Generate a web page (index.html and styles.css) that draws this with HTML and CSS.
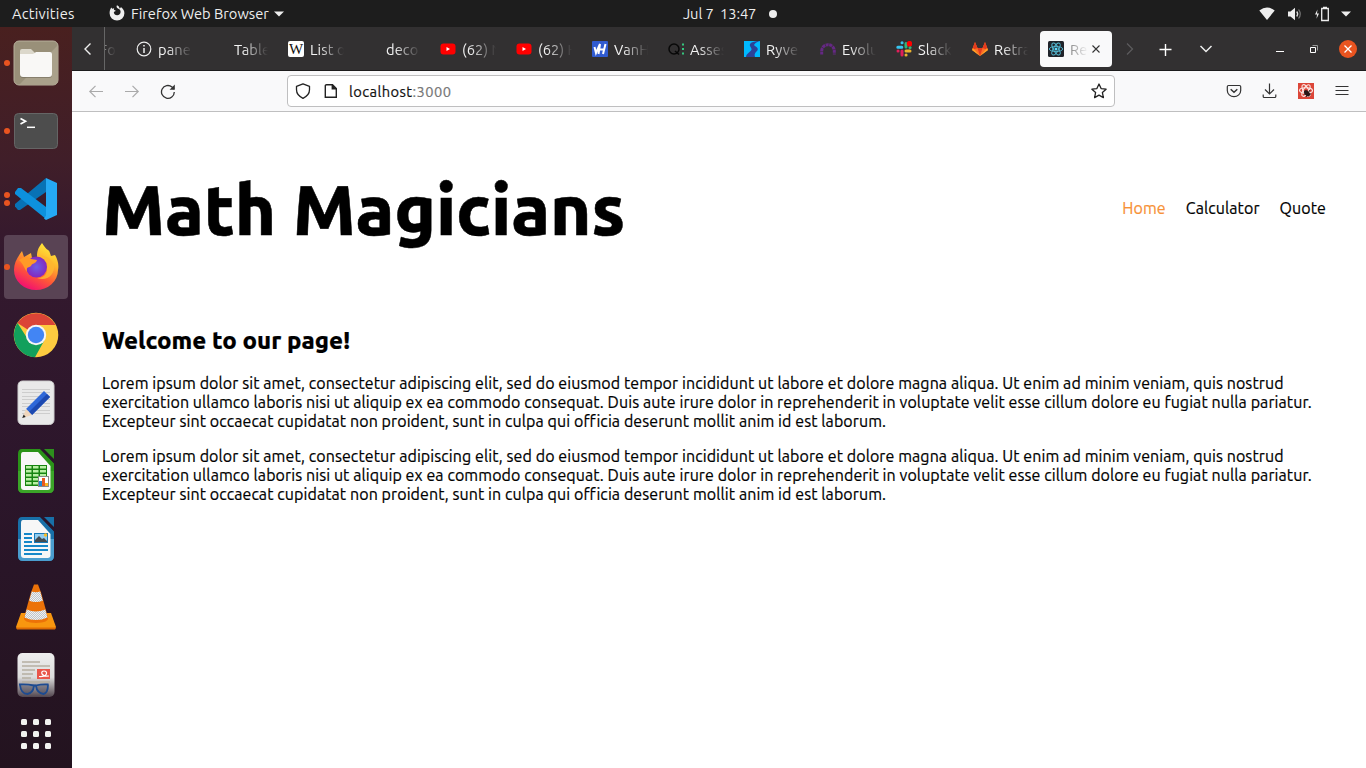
FILE: index.html
```html
<!DOCTYPE html>
<html lang="en">
<head>
<meta charset="utf-8">
<title>React App</title>
<link rel="stylesheet" href="styles.css">
</head>
<body>
<header class="panel">
  <div class="panel-left">
    <span class="activities">Activities</span>
    <svg class="ff" width="16" height="16" viewBox="0 0 16 16"><path d="M8 .2c2 1 2.500 2.200 2.500 3.200.8-.3 1.400-1 1.400-1.500 2 1.400 3.500 3.600 3.500 6.300a7.400 7.400 0 0 1-14.800 0c0-2.300.6-4.300 1.700-5.700l.9 1.300 1.900-.6-.2 1.600 1.900 1c-.6.900-1.600.8-2 1.400.2 1.700 1.500 3 3.300 3 2 0 3.500-1.500 3.500-3.500 0-2.200-1.500-2.800-2.700-3.300C7.400 2.600 7.300 1.300 8 .2z" fill="#eee"/></svg>
    <span class="appname">Firefox Web Browser</span>
    <svg width="10" height="6" viewBox="0 0 10 6"><path d="M0 .5h10L5 5.500z" fill="#eee"/></svg>
  </div>
  <div class="panel-clock"><span class="clock">Jul 7&nbsp; 13:47</span><i class="dot"></i></div>
  <div class="panel-right">
    <svg width="16" height="14" viewBox="0 0 16 14"><path d="M.3 3.600Q8-2.400 15.700 3.600L8 13z" fill="#eee"/></svg>
    <svg width="16" height="14" viewBox="0 0 16 14"><path d="M1 4.500h2.500L8 .8v12.400L3.500 9.500H1z" fill="#eee"/><path d="M9.700 4.500q2 2.500 0 5" fill="none" stroke="#ddd" stroke-width="1.300"/><path d="M11.600 2.500q3.300 4.500 0 9" fill="none" stroke="#777" stroke-width="1.200"/></svg>
    <svg width="16" height="16" viewBox="0 0 16 16"><path d="M3.500 3.500L1 8.500h2l-.5 4.300L5 7.500H3z" fill="#eee"/><path d="M7.700 2.500h6.600v12H7.700zM9 1.300h4" fill="none" stroke="#eee" stroke-width="1.300"/></svg>
    <svg width="10" height="6" viewBox="0 0 10 6"><path d="M0 .5h10L5 5.500z" fill="#eee"/></svg>
  </div>
</header>
<div class="desktop">
  <nav class="dock">
    <div class="app run1"><svg viewBox="0 0 48 48"><rect x="2" y="2" width="44" height="44" rx="5" fill="#999079" stroke="#b7af9c"/><path d="M46 6v35q0 5-5 5H7z" fill="#aaa18b"/><path d="M8 12q0-2 2-2h9l4 4h13v5H8z" fill="#dcd8cb"/><path d="M8 16h13l3-3h14q2 0 2 2v21q0 3-3 3H11q-3 0-3-3z" fill="#6f6959" opacity=".6"/><path d="M8 15h13l3-2h14q2 0 2 2v20q0 3-3 3H11q-3 0-3-3z" fill="#f9f8f6"/></svg></div>
    <div class="app run1"><svg viewBox="0 0 48 48"><rect x="2.500" y="6.500" width="43" height="35" rx="4" fill="#4d4d4d" stroke="#656565"/><path d="M8.500 11.500l5 2.700-5 2.700" fill="none" stroke="#fff" stroke-width="1.700"/><path d="M15 20.300h8" stroke="#fff" stroke-width="1.500"/></svg></div>
    <div class="app run2"><svg viewBox="0 0 48 48"><path d="M34 3V17L8 35 6 35 3 31.500V29z" fill="#0872b5"/><path d="M3 17l3-4h3l25 19v12L3 19z" fill="#0d91dd"/><path d="M34 3l11 5v32l-11 5-2-1.500 2-3z" fill="#25a9f4"/></svg></div>
    <div class="app run1 current"><svg viewBox="0 0 48 48"><defs><linearGradient id="fx" x1=".8" y1="0" x2=".3" y2="1"><stop offset="0" stop-color="#fff23c"/><stop offset=".35" stop-color="#ffb52c"/><stop offset=".65" stop-color="#ff5b35"/><stop offset="1" stop-color="#f10b74"/></linearGradient><radialGradient id="gl"><stop offset="0" stop-color="#6a5ee8"/><stop offset="1" stop-color="#8428be"/></radialGradient></defs><path d="M30 0c2 3 4 6 6 7s2 4 3 6l4-1c3 5 4 10 3 15a22 20 0 0 1-44 0c0-7 3-12 8-19l2 6 7-4 1 5 5 0c0-5 0-9 5-15z" fill="url(#fx)"/><circle cx="24.500" cy="24" r="10.500" fill="url(#gl)"/><path d="M7 17c5-3 8-3 12-1l6 1c-1 4-5 3-6 6-2 2-5 0-4 6-3-4-3-7-8-12z" fill="#ff9a26"/><path d="M28 12c6 3 8 8 7 13 1 7-5 10-10 10 10 4 18-4 17-12-1-7-8-10-14-11z" fill="#ffb72f" opacity=".85"/></svg></div>
    <div class="app"><svg viewBox="0 0 48 48"><circle cx="24" cy="24" r="22.300" fill="#fdcb40"/><path d="M24 24L5.500 12A22.300 22.300 0 0 1 43.500 14H24z" fill="#db4437"/><path d="M5.500 12A22.300 22.300 0 0 0 23 46.300L32 30H17z" fill="#12a05c"/><circle cx="24" cy="24" r="10.200" fill="#f5f5f5"/><circle cx="24" cy="24" r="8.200" fill="#4285f4"/></svg></div>
    <div class="app"><svg viewBox="0 0 48 48"><rect x="6" y="2" width="36" height="43.500" rx="4.500" fill="#e9e9e9" stroke="#cfcfcf"/><path d="M10 10.500h28M10 13.500h28M10 17.500h28M10 20.500h28M10 24.500h28M10 27.500h28M10 31.500h28M10 34.500h28" stroke="#cdcdcd"/><path d="M32 12l6 6-18 18-6-6z" fill="#2f68d8"/><path d="M35 15l3 3-18 18-3-3z" fill="#1d49b0"/><path d="M14 30l6 6-9.500 3z" fill="#f0d6bc"/><path d="M11.700 35.500l2 2.500-3.500 1z" fill="#222"/></svg></div>
    <div class="app"><svg viewBox="0 0 48 48"><path d="M10 2h18l14 14v25q0 5-5 5H11q-5 0-5-5V7q0-5 4-5z" fill="#2a9318"/><path d="M6 24h36v17q0 5-5 5H11q-5 0-5-5z" fill="#3ba528"/><path d="M11 5h15l12.500 14v21q0 3-3 3H12q-3 0-3-3V8q0-3 2-3z" fill="#f7f7f7"/><path d="M29 1l14 15" stroke="#2a152b" stroke-width="2"/><path d="M32 2h10v10z" fill="#2d8f1d"/><path d="M13 18h22v21H13z" fill="#168410"/><path d="M14 19h5.500v2.500H14zM21 19h5.500v2.500H21zM28 19h6v2.500h-6zM14 23h5.500v2.500H14zM21 23h5.500v2.500H21zM28 23h6v2.500h-6zM14 27h5.500v2.500H14zM21 27h5.500v2.500H21zM28 27h6v2.500h-6zM14 31h5.500v2.500H14zM21 31h5.500v2.500H21zM14 35h5.500v2.500H14zM21 35h5.500v2.500H21z" fill="#b9f0a4"/><rect x="26.500" y="29.500" width="10" height="10" fill="#fff" stroke="#888"/><path d="M27 34h3v5h-3z" fill="#1e88d2"/><path d="M30 31h3v8h-3z" fill="#e65b20"/><path d="M33 36h3v3h-3z" fill="#fbb51f"/></svg></div>
    <div class="app"><svg viewBox="0 0 48 48"><path d="M10 2h18l14 14v25q0 5-5 5H11q-5 0-5-5V7q0-5 4-5z" fill="#1870a8"/><path d="M6 24h36v17q0 5-5 5H11q-5 0-5-5z" fill="#4a9dce"/><path d="M11 5h15l12.500 14v21q0 3-3 3H12q-3 0-3-3V8q0-3 2-3z" fill="#f7f7f7"/><path d="M29 1l14 15" stroke="#2a152b" stroke-width="2"/><path d="M32 2h10v10z" fill="#1870a8"/><path d="M12 19h8M12 23h8M12 27h8M12 31h24M12 35h24M12 39h18" stroke="#1688c9" stroke-width="2"/><rect x="22.500" y="18.500" width="13" height="9" fill="#91cdf0" stroke="#1779b8"/><path d="M23 27v-2l4-4 3 3 2-1 3 3v1z" fill="#434b50"/><circle cx="33.500" cy="20" r="1.700" fill="#f8bc26"/></svg></div>
    <div class="app"><svg viewBox="0 0 48 48"><defs><pattern id="chk" width="2" height="2" patternUnits="userSpaceOnUse"><path d="M0 0h2v2H0z" fill="#f0f1f2"/><path d="M0 0h1v1H0zM1 1h1v1H1z" fill="#bfc5ca"/></pattern></defs><path d="M9 30h30l5 14-1 2H5l-1-2z" fill="#f8960f"/><path d="M4 44.500h40l-1 2H5z" fill="#dc6a04"/><path d="M22 1.500h4l3 8 7 25q1 5-12 5.500-13-.5-12-5.500l7-25z" fill="#ec7208"/><path d="M19.800 8.500q4 1.500 8.400 0l2.600 9.300q-7 2.500-13.600 0zM14.700 26.500q9 4 18.600 0l2.200 8q-11.500 5-23 0z" fill="url(#chk)"/></svg></div>
    <div class="app"><svg viewBox="0 0 48 48"><defs><linearGradient id="dv" x1="0" y1="0" x2="0" y2="1"><stop offset="0" stop-color="#eee"/><stop offset=".55" stop-color="#dcdcdc"/><stop offset="1" stop-color="#52464f"/></linearGradient></defs><rect x="5.500" y="2" width="37" height="44" rx="5" fill="url(#dv)"/><path d="M10 11h18M10 15h28M10 19h13M10 23h11M10 27h9M10 31h28" stroke="#b5aea1" stroke-width="1.700"/><path d="M25 18h13v10H25z" fill="#e9554a"/><path d="M27 25.500c9 .5 9-5.500 5-5.500s-3 6 5 5" stroke="#fff" stroke-width="1.200" fill="none"/><path d="M7 33.500Q15 33 22 34.500h2Q30 33 36.500 33.500M8 34q1 9 7.500 9Q21 42 22 35M24 35q1 7 7.500 8Q36 42 36 33.500" fill="#4e5163" fill-opacity=".4" stroke="#1d4b91" stroke-width="1.800"/></svg></div>
    <div class="apps"><i></i><i></i><i></i><i></i><i></i><i></i><i></i><i></i><i></i></div>
  </nav>
  <section class="browser">
    <div class="tabbar">
      <div class="scroll-left"><svg width="16" height="16" viewBox="0 0 16 16"><path d="M10.500 2.500L5 8l5.500 5.500" fill="none" stroke="#eee" stroke-width="1.400"/></svg></div>
      <div class="tabs">
        <div class="tab"><i class="fav"></i><span class="dim">Fo</span></div>
        <div class="tab"><svg class="fav" viewBox="0 0 16 16"><circle cx="8" cy="8" r="6.800" fill="none" stroke="#eee" stroke-width="1.200"/><path d="M8 7v5M8 4v1.500" stroke="#eee" stroke-width="1.500"/></svg><span>pane</span></div>
        <div class="tab"><i class="fav"></i><span>Table</span></div>
        <div class="tab"><b class="fav wiki">W</b><span>List of</span></div>
        <div class="tab"><i class="fav"></i><span>deco</span></div>
        <div class="tab"><svg class="fav" viewBox="0 0 16 16"><rect x=".5" y="2.500" width="15" height="11" rx="3" fill="#f00"/><path d="M6.500 6v4L10 8z" fill="#fff"/></svg><span>(62) N</span></div>
        <div class="tab"><svg class="fav" viewBox="0 0 16 16"><rect x=".5" y="2.500" width="15" height="11" rx="3" fill="#f00"/><path d="M6.500 6v4L10 8z" fill="#fff"/></svg><span>(62) H</span></div>
        <div class="tab"><svg class="fav" viewBox="0 0 16 16"><rect width="16" height="16" rx="1" fill="#305bd0"/><path d="M2.500 6l1.500 6 4-9-1.500 10M7.500 8.500h5M13.500 3L11 13" fill="none" stroke="#fff" stroke-width="2"/></svg><span>VanH</span></div>
        <div class="tab"><svg class="fav" viewBox="0 0 16 16"><circle cx="6" cy="8" r="5" fill="none" stroke="#080808" stroke-width="1.500"/><path d="M7 10l4 3.500" stroke="#080808" stroke-width="1.500"/><path d="M15 2.500v11" stroke="#35d888" stroke-width="1.800" stroke-dasharray="2 2.500"/></svg><span>Asses</span></div>
        <div class="tab"><svg class="fav" viewBox="0 0 16 16"><path d="M0 0h16v16H0z" fill="#00b9ff"/><path d="M16 0C8 0 5 2.500 6 5s3 3 0 5.500S2 14 2 16h9c-1-3 0-4 2-6s0-4-2-5 0-3.500 5-5z" fill="#2c4298"/></svg><span>Ryve</span></div>
        <div class="tab"><svg class="fav" viewBox="0 0 16 16"><path d="M1.700 13.500V10a6.300 6.300 0 0 1 12.600 0v3.500" fill="none" stroke="#652884" stroke-width="3" stroke-dasharray="3 .6"/></svg><span>Evolu</span></div>
        <div class="tab"><svg class="fav" viewBox="0 0 16 16"><g fill="none" stroke-width="3" stroke-linecap="round"><path d="M1.800 6.200h4M6 1.700h.1" stroke="#36c5f0"/><path d="M10 6V2.500M14 6.500h.1" stroke="#2eb67d"/><path d="M6 10v4M2 10h.1" stroke="#e01e5a"/><path d="M10 10h4M10 14h.1" stroke="#ecb22e"/></g><circle cx="13.500" cy="2.700" r="2.800" fill="#f00"/></svg><span>Slack</span></div>
        <div class="tab"><svg class="fav" viewBox="0 0 16 16"><path d="M0 9l3-8 2.500 6h5L13 1l3 8-8 6z" fill="#fc6d26"/><path d="M5.500 7h5L8 15zM0 9l3-8 2.500 6zM16 9l-3-8-2.500 6z" fill="#e43b1e"/><path d="M0 9l1-2 7 8zM16 9l-1-2-7 8z" fill="#fca326"/></svg><span>Retra</span></div>
        <div class="tab active"><svg class="fav" viewBox="0 0 16 16"><rect width="16" height="16" rx="1.500" fill="#20232a"/><g fill="none" stroke="#53b9d2" stroke-width=".9"><ellipse cx="8" cy="8" rx="6.700" ry="2.600"/><ellipse cx="8" cy="8" rx="6.700" ry="2.600" transform="rotate(60 8 8)"/><ellipse cx="8" cy="8" rx="6.700" ry="2.600" transform="rotate(120 8 8)"/></g><circle cx="8" cy="8" r="1.500" fill="#61dafb"/></svg><span>Rea</span><svg class="close" width="8" height="8" viewBox="0 0 8 8"><path d="M.5.5l7 7M7.500.5l-7 7" stroke="#333" stroke-width="1.100"/></svg></div>
      </div>
      <div class="tab-tools">
        <svg width="16" height="16" viewBox="0 0 16 16"><path d="M5 2.500L10.500 8 5 13.500" fill="none" stroke="#5c5b5d" stroke-width="1.300"/></svg>
        <svg width="16" height="16" viewBox="0 0 16 16"><path d="M8.500 3v12M2.500 8.500h12" stroke="#fff" stroke-width="1.400"/></svg>
        <svg width="16" height="16" viewBox="0 0 16 16"><path d="M2.500 5L8 10.500 13.500 5" fill="none" stroke="#eee" stroke-width="1.500"/></svg>
      </div>
      <div class="window-tools">
        <svg width="8" height="8" viewBox="0 0 8 8"><path d="M0 6.500h8" stroke="#fff"/></svg>
        <svg width="8" height="8" viewBox="0 0 8 8"><path d="M.5 2.500h5v5h-5z" fill="none" stroke="#fff"/><path d="M2.500.5h5v5" fill="none" stroke="#999"/></svg>
        <svg width="18" height="18" viewBox="0 0 18 18"><circle cx="9" cy="9" r="9" fill="#e95420"/><path d="M5.500 5.500l7 7M12.500 5.500l-7 7" stroke="#fff" stroke-width="1.300"/></svg>
      </div>
    </div>
    <div class="toolbar">
      <div class="nav-tools">
        <svg width="16" height="16" viewBox="0 0 16 16"><path d="M15 8.500H1.800M7.500 2.800L1.800 8.500l5.700 5.700" fill="none" stroke="#aaa" stroke-width="1.200"/></svg>
        <svg width="16" height="16" viewBox="0 0 16 16"><path d="M1 8.500h13.200M8.500 2.800L14.200 8.500l-5.700 5.700" fill="none" stroke="#aaa" stroke-width="1.200"/></svg>
        <svg width="16" height="16" viewBox="0 0 16 16"><path d="M14.300 9A6.400 6.400 0 1 1 12 4l2 2" fill="none" stroke="#333" stroke-width="1.300"/><path d="M14.800 1.500v5.200H9.600z" fill="#333"/></svg>
      </div>
      <div class="urlbar">
        <svg width="16" height="16" viewBox="0 0 16 16"><path d="M8 .8l6.500 2.500v3.500q0 5.500-6.500 8.500-6.500-3-6.500-8.500V3.300z" fill="none" stroke="#222" stroke-width="1.300" stroke-linejoin="round"/></svg>
        <svg width="16" height="16" viewBox="0 0 16 16"><path d="M3.500 1.700h6l3.800 3.800v8.800h-11V2.700q0-1 1.200-1zM9.300 2v3.700h4" fill="none" stroke="#222" stroke-width="1.400"/><path d="M9 1.500v4.500h4.500z" fill="#222"/></svg>
        <span class="url">localhost<em>:3000</em></span>
        <svg width="16" height="16" viewBox="0 0 16 16"><path d="M8 1l2.100 4.600 5 .6-3.700 3.400 1 5L8 12.100l-4.400 2.500 1-5L.9 6.200l5-.6z" fill="none" stroke="#222" stroke-width="1.300" stroke-linejoin="round"/></svg>
      </div>
      <div class="actions">
        <svg width="16" height="16" viewBox="0 0 16 16"><path d="M2.500 2.500h11q1.200 0 1.200 1.200V7.500a6.700 6.200 0 0 1-13.400 0V3.700q0-1.200 1.200-1.200z" fill="none" stroke="#333" stroke-width="1.200"/><path d="M4.700 6.300L8 9.300l3.300-3" fill="none" stroke="#333" stroke-width="1.500"/></svg>
        <svg width="16" height="16" viewBox="0 0 16 16"><path d="M7.500.5v10.300M3 6.500L7.500 11l4.500-4.500M1.200 11.500v2q0 1 1 1h10.600q1 0 1-1v-2" fill="none" stroke="#333" stroke-width="1.200"/></svg>
        <svg width="16" height="16" viewBox="0 0 16 16"><path d="M0 0h16v16H0z" fill="#dc4638"/><g fill="none" stroke="#fbe6e3" stroke-width="1.100"><ellipse cx="8" cy="7.500" rx="6.500" ry="2.700"/><ellipse cx="8" cy="7.500" rx="6.500" ry="2.700" transform="rotate(60 8 7.500)"/><ellipse cx="8" cy="7.500" rx="6.500" ry="2.700" transform="rotate(120 8 7.500)"/></g><ellipse cx="9" cy="10.300" rx="2.300" ry="3.600" transform="rotate(-40 9 10.300)" fill="#2a1717"/><path d="M6 11h7M8 14l4-7" stroke="#2a1717"/></svg>
        <svg width="16" height="16" viewBox="0 0 16 16"><path d="M1.500 3.500h13M1.500 7.500h13M1.500 11.500h13" stroke="#333" stroke-width="1.200"/></svg>
      </div>
    </div>
    <main class="page">
      <div class="masthead">
        <h1>Math Magicians</h1>
        <ul class="menu"><li class="on">Home</li><li>Calculator</li><li>Quote</li></ul>
      </div>
      <h2>Welcome to our page!</h2>
      <p>Lorem ipsum dolor sit amet, consectetur adipiscing elit, sed do eiusmod tempor incididunt ut labore et dolore magna aliqua. Ut enim ad minim veniam, quis nostrud<br>exercitation ullamco laboris nisi ut aliquip ex ea commodo consequat. Duis aute irure dolor in reprehenderit in voluptate velit esse cillum dolore eu fugiat nulla pariatur.<br>Excepteur sint occaecat cupidatat non proident, sunt in culpa qui officia deserunt mollit anim id est laborum.</p>
      <p>Lorem ipsum dolor sit amet, consectetur adipiscing elit, sed do eiusmod tempor incididunt ut labore et dolore magna aliqua. Ut enim ad minim veniam, quis nostrud<br>exercitation ullamco laboris nisi ut aliquip ex ea commodo consequat. Duis aute irure dolor in reprehenderit in voluptate velit esse cillum dolore eu fugiat nulla pariatur.<br>Excepteur sint occaecat cupidatat non proident, sunt in culpa qui officia deserunt mollit anim id est laborum.</p>
    </main>
  </section>
</div>
</body>
</html>
```
FILE: styles.css
```css
* { box-sizing: border-box; }
body { margin: 0; width: 1366px; height: 768px; overflow: hidden; display: flex; flex-direction: column; font-family: Ubuntu, "Noto Sans", sans-serif; font-size: 14.67px; background: #fff; }
svg { display: block; flex: none; }
ul, h1, h2, p { margin: 0; padding: 0; }

.panel { height: 27px; flex: none; background: #1d1d1d; color: #eee; display: grid; grid-template-columns: 683px 94px 1fr; align-items: center; white-space: nowrap; line-height: 26px; }
.panel-left { display: flex; align-items: center; padding-left: 12px; }
.activities { width: 97px; letter-spacing: .25px; }
.appname { width: 143px; margin-left: 6px; }
.panel-left .ff { margin-top: -2px; }
.panel-clock { display: flex; align-items: center; justify-content: space-between; letter-spacing: -.1px; }
.dot { width: 8px; height: 8px; border-radius: 50%; background: #eee; }
.panel-right { display: flex; align-items: center; justify-content: flex-end; gap: 11px; padding-right: 15px; }
.panel-right svg:first-child { margin-right: 1px; }

.desktop { flex: 1; display: flex; min-height: 0; }
.dock { width: 72px; flex: none; padding: 4px 4px 0; background: linear-gradient(#49201f, #401e29 18%, #34192e 30%, #2c162b 60%, #23131f); }
.app { height: 64px; margin-bottom: 4px; display: flex; align-items: center; justify-content: center; position: relative; border-radius: 4px; }
.app svg { width: 48px; height: 48px; }
.current { background: #594354; }
.run1::before, .run2::before { content: ""; position: absolute; left: 0; top: 29px; width: 6px; height: 6px; border-radius: 50%; background: #e95420; }
.run2::before { top: 25px; box-shadow: 0 8px #e95420; }
.apps { display: grid; grid-template-columns: repeat(3, 6px); grid-auto-rows: 6px; gap: 6px; justify-content: center; padding-top: 8px; }
.apps i { background: #f2f2f0; border-radius: 1.500px; }

.browser { flex: 1; min-width: 0; display: flex; flex-direction: column; }
.tabbar { height: 44px; flex: none; background: #323031; border-bottom: 1px solid #1c1b1c; display: flex; color: #f4f4f4; }
.scroll-left { width: 33px; border-right: 1px solid #666; display: flex; align-items: center; padding-left: 8px; }
.tabs { width: 1009px; display: flex; justify-content: flex-end; overflow: hidden; }
.tab { flex: none; width: 72px; height: 36px; margin: 4px 2px 0; padding: 0 8px; display: flex; align-items: center; gap: 6px; border-radius: 4px; }
.fav { width: 16px; height: 16px; flex: none; }
.wiki { background: #fff; color: #111; border-radius: 2px; font: 15px/16px "Liberation Serif", serif; text-align: center; display: flex; justify-content: center; }
.tab span { width: 34px; padding-top: 1px; overflow: hidden; white-space: nowrap; letter-spacing: .1px; -webkit-mask-image: linear-gradient(90deg, #000 25%, transparent); mask-image: linear-gradient(90deg, #000 25%, transparent); }
.tab .dim { text-align: right; }
.active { background: #f9f9fa; color: #555; }
.tab.active span { width: 18px; -webkit-mask-image: linear-gradient(90deg, rgba(0,0,0,.7), transparent); mask-image: linear-gradient(90deg, rgba(0,0,0,.7), transparent); }
.active .close { margin-left: -2px; }
.tab-tools { display: flex; align-items: center; width: 162px; padding-left: 8px; gap: 22px; }
.tab-tools svg:first-child { margin-right: -3px; }
.tab-tools svg:last-child { margin-left: 3px; }
.window-tools { display: flex; align-items: center; gap: 26px; }
.window-tools svg:last-child { margin-left: -5px; }

.toolbar { height: 41px; flex: none; background: #f9f9fa; border-bottom: 1px solid #bfbfc0; display: flex; align-items: center; }
.nav-tools { width: 215px; padding-left: 16px; display: flex; gap: 20px; }
.urlbar { width: 828px; height: 32px; background: #fff; border: 1px solid #bfbfc0; border-radius: 4px; display: flex; align-items: center; padding: 0 7px; }
.urlbar svg + svg { margin-left: 12px; }
.url { flex: 1; margin-left: 10px; padding-top: 1px; color: #111; letter-spacing: .43px; -webkit-text-stroke: .2px; }
.url em { font-style: normal; color: #777; }
.actions { display: flex; gap: 20px; margin-left: 111px; }

.page { flex: 1; background: #fff; padding: 48px 40px 0 30px; color: #000; font-size: 16px; line-height: 19px; white-space: nowrap; letter-spacing: .085px; -webkit-text-stroke: .2px; }
.masthead { display: flex; justify-content: space-between; align-items: center; height: 98px; }
h1 { font-size: 70.4px; line-height: 98px; letter-spacing: -.2px; font-weight: 800; -webkit-text-stroke: .5px; }
.menu { display: flex; list-style: none; gap: 20px; padding-bottom: 1px; }
.on { color: #f79137; }
h2 { font-size: 24px; line-height: 28px; margin: 69px 0 19px; letter-spacing: 0; font-weight: 800; }
p { height: 57px; margin-bottom: 16px; }
```
